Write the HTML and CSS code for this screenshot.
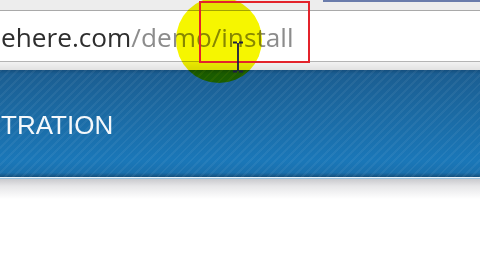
FILE: index.html
```html
<!DOCTYPE html>
<html lang="en">
<head>
  <meta charset="UTF-8" />
  <title>Install</title>
  <link rel="stylesheet" href="styles.css">
</head>
<body>
  <div class="tabstrip"><span class="tab-edge"></span></div>

  <div class="addressbar">
    <span class="url-host">ehere.com</span><span class="url-path">/demo/install</span>
  </div>

  <div class="toolbar-gap"></div>

  <div class="banner">
    <h1 class="banner-title">TRATION</h1>
  </div>
  <div class="banner-shadow"></div>

  <!-- screen recording highlight + cursor -->
  <div class="spotlight"></div>
  <div class="focus-box"></div>
  <svg class="ibeam" width="12" height="32" viewBox="0 0 12 32">
    <path d="M1 1.5h4M7 1.5h4M6 2v28M1 30.5h4M7 30.5h4" stroke="#1c1c44" stroke-width="1.8" fill="none"/>
  </svg>
</body>
</html>
```

FILE: styles.css
```css
body {
  margin: 0;
  width: 480px;
  height: 270px;
  overflow: hidden;
  background: #fff;
  font-family: "Open Sans", "Liberation Sans", sans-serif;
  position: relative;
}
.tabstrip {
  height: 10px;
  background: #ededed;
  display: flex;
  justify-content: flex-end;
}
.tab-edge {
  width: 157px;
  height: 2px;
  background: #6a7cab;
}
.addressbar {
  height: 50px;
  border-top: 1px solid #a9a9a9;
  border-bottom: 1px solid #b4b4b4;
  background: #fff;
  display: flex;
  align-items: center;
  font-size: 26.2px;
  line-height: 1;
  padding: 2px 0 0 1px;
  box-sizing: border-box;
  height: 52px;
  white-space: nowrap;
}
.url-host {
  color: #2e2e2e;
}
.url-path {
  color: #8c8c8c;
}
.toolbar-gap {
  height: 8px;
  background: linear-gradient(#f2f2f2, #e2e2e2);
}
.banner {
  height: 107px;
  background:
    repeating-linear-gradient(135deg, rgba(255,255,255,0.05) 0 2px, transparent 2px 6px),
    linear-gradient(#154f7e 0, #1b5e92 4px, #1b6aa3 40%, #1a77b8 85%, #1a70ad 96%, #15507c 100%);
  border-bottom: 1px solid #e8f3fb;
  display: flex;
  align-items: center;
}
.banner-title {
  margin: 4px 0 0 1px;
  font-family: "Liberation Sans", Arial, sans-serif;
  font-weight: normal;
  font-size: 26px;
  color: #f4f8fb;
}
.banner-shadow {
  height: 20px;
  border-top: 1px solid #9cc3de;
  background: linear-gradient(#c9c9cd, #e6e6e8 35%, #fff);
}
.spotlight {
  position: absolute;
  left: 176px;
  top: -3px;
  width: 86px;
  height: 86px;
  border-radius: 50%;
  background: #f6f600;
  mix-blend-mode: multiply;
}
.focus-box {
  position: absolute;
  left: 199px;
  top: 1px;
  width: 107px;
  height: 58px;
  border: 2px solid #e3232b;
}
.ibeam {
  position: absolute;
  left: 232px;
  top: 41px;
}
```
